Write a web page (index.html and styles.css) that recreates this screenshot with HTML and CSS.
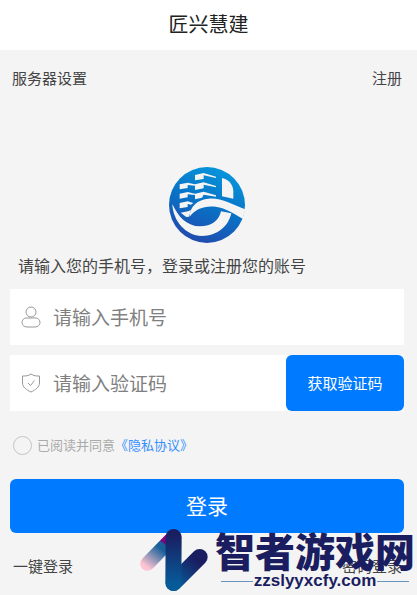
FILE: index.html
```html
<!DOCTYPE html>
<html lang="zh-CN">
<head>
    <meta charset="UTF-8">
    <meta name="viewport" content="width=device-width, initial-scale=1.0">
    <title>匠兴慧建</title>
    <link rel="stylesheet" href="styles.css">
</head>
<body>
    <header class="header">
        <h1>匠兴慧建</h1>
    </header>

    <nav class="links">
        <a href="#">服务器设置</a>
        <a href="#">注册</a>
    </nav>

    <main class="content">
        <svg class="logo" viewBox="27 27 228 228" role="img" aria-label="匠兴慧建">
            <defs>
                <linearGradient id="logoFill" x1="0.7" y1="0" x2="0.3" y2="1">
                    <stop offset="0" stop-color="#0896dc"/>
                    <stop offset="0.5" stop-color="#0872c6"/>
                    <stop offset="1" stop-color="#2448ac"/>
                </linearGradient>
            </defs>
            <circle cx="141" cy="141" r="114" fill="url(#logoFill)"/>
            <g fill="#f4f4f4">
                <!-- edificios -->
                <path d="M105 51l26-6 37 11v4l-37-8v11l-26 4z"/>
                <path d="M105 79l26-6 37 11v4l-37-8v11l-26 5z"/>
                <path d="M105 107l26-6 37 11v4l-37-6-5 9-21 5z"/>
                <path d="M59 79l24-5 22 5v4l-22-2v9l-24 4z"/>
                <path d="M59 107l24-5 22 5v4l-22-2v9l-24 4z"/>
                <path d="M59 135l24-5 17 5-7 5-10-2v9l-24 4z"/>
                <path d="M62 164l22-4 9-4-6 20-8 1z"/>
                <path d="M186 60c20 4 33 20 34 39v23l-34-7z"/>
                <!-- ola -->
                <path d="M89 176c0-30 24-52 57-54 39-3 73 19 110 32l-8 28c-25-14-50-32-81-36-33-4-60 6-78 30z"/>
                <path d="M37 138c17 38 44 67 83 67 35 0 57-18 63-45l31 6c-9 40-43 68-88 68-49-1-87-45-89-96z"/>
            </g>
        </svg>

        <form class="login-form">
            <p class="tip">请输入您的手机号，登录或注册您的账号</p>

            <div class="field">
                <svg class="icon" viewBox="0 0 20 22" aria-hidden="true">
                    <circle cx="10" cy="6" r="5"/>
                    <path d="M5 12h10c2 0 4 2 4 4.500s-2 4.500-5 4.500H6c-3 0-5-2-5-4.500S3 12 5 12z"/>
                </svg>
                <input type="tel" placeholder="请输入手机号" aria-label="手机号">
            </div>

            <div class="field">
                <svg class="icon" viewBox="0 0 20 22" aria-hidden="true">
                    <path d="M10 2c3 2 5 2 8.500 2v7c0 4-4 7-8.500 9-4.500-2-8.500-5-8.500-9V4C5 4 7 4 10 2z"/>
                    <path d="M7 11l2.500 2.500L13.500 8.500"/>
                </svg>
                <input type="text" placeholder="请输入验证码" aria-label="验证码">
                <button type="button" class="code-btn">获取验证码</button>
            </div>

            <div class="agree">
                <input type="checkbox" id="agree">
                <label for="agree">已阅读并同意</label><a href="#">《隐私协议》</a>
            </div>

            <button type="submit" class="login-btn">登录</button>
        </form>
    </main>

    <footer class="links bottom">
        <a href="#">一键登录</a>
        <a href="#">密码登录</a>
    </footer>

    <div class="watermark">
        <svg class="mark" viewBox="27 27 204 186" aria-hidden="true">
            <defs>
                <linearGradient id="pink" gradientUnits="userSpaceOnUse" x1="45" y1="140" x2="106" y2="60">
                    <stop offset="0" stop-color="#ffc4d2"/>
                    <stop offset="0.700" stop-color="#17609a"/>
                    <stop offset="0.850" stop-color="#17609a"/>
                    <stop offset="0.900" stop-color="#800080"/>
                </linearGradient>
                <linearGradient id="navy" gradientUnits="userSpaceOnUse" x1="128" y1="40" x2="128" y2="190">
                    <stop offset="0" stop-color="#1a1d60"/>
                    <stop offset="1" stop-color="#075a98"/>
                </linearGradient>
                <linearGradient id="arm" gradientUnits="userSpaceOnUse" x1="135" y1="190" x2="195" y2="120">
                    <stop offset="0" stop-color="#075a98"/>
                    <stop offset="1" stop-color="#1a1d60"/>
                </linearGradient>
            </defs>
            <g fill="none" stroke-linecap="round">
                <path d="M49 131L118 61" stroke="url(#pink)" stroke-width="43"/>
                <path d="M128 189L206 111" stroke="url(#arm)" stroke-width="48"/>
                <path d="M128 51L127 189" stroke="url(#navy)" stroke-width="48"/>
            </g>
        </svg>
        <div class="site">
            <strong>智者游戏网</strong>
            <span class="url">zzslyyxcfy.com</span>
        </div>
    </div>
</body>
</html>
```
FILE: styles.css
```css
* {
    box-sizing: border-box;
}

body {
    position: relative;
    margin: 0;
    min-height: 100vh;
    background: #f4f4f4;
    color: #444;
    font-family: "Noto Sans CJK SC", sans-serif;
    font-size: 15px;
    overflow-x: hidden;
}

a {
    color: inherit;
    text-decoration: none;
}

button,
input {
    font-family: inherit;
}

.header {
    height: 50px;
    background: #fff;
    text-align: center;
}

.header h1 {
    margin: 0;
    color: #222;
    font-size: 20px;
    font-weight: 400;
    line-height: 48px;
}

.links {
    display: flex;
    justify-content: space-between;
    padding: 16px 15px 0 12px;
    line-height: 24px;
}

.content {
    padding: 77px 13px 0 10px;
}

.logo {
    display: block;
    width: 76px;
    height: 76px;
    margin: 0 auto;
}

.tip {
    margin: 10px 8px 12px;
    font-size: 16px;
    line-height: 24px;
}

.field {
    display: flex;
    align-items: center;
    height: 56px;
    margin-bottom: 10px;
    padding-left: 11px;
    background: #fff;
}

.icon {
    flex: none;
    width: 20px;
    height: 22px;
    margin-right: 12px;
    fill: none;
    stroke: #999;
    stroke-width: 1;
}

.field input {
    flex: 1;
    min-width: 0;
    height: 100%;
    padding: 0 0 2px;
    border: 0;
    outline: none;
    background: none;
    color: #333;
    font-size: 19px;
}

.field input::placeholder {
    color: #808080;
}

.code-btn {
    flex: none;
    width: 118px;
    height: 100%;
    padding: 0 0 2px;
    border: 0;
    border-radius: 6px;
    background: #007aff;
    color: #fff;
    font-size: 15px;
}

.agree {
    display: flex;
    align-items: center;
    height: 20px;
    margin-top: 24px;
    padding-left: 3px;
    color: #aaa;
    font-size: 13px;
    line-height: 18px;
}

.agree input {
    appearance: none;
    width: 19px;
    height: 19px;
    margin: 0 5px 0 0;
    border: 1px solid #c4c4c4;
    border-radius: 50%;
}

.agree input:checked {
    background: #007aff;
}

.agree a {
    color: #3790ff;
}

.login-btn {
    display: block;
    width: 100%;
    height: 54px;
    margin-top: 24px;
    padding: 0 0 2px;
    border: 0;
    border-radius: 6px;
    background: #007aff;
    color: #fff;
    font-size: 21px;
}

.bottom {
    padding: 21px 15px 0 13px;
}

/* marca de agua sobre el pie */
.watermark {
    position: absolute;
    right: 2px;
    bottom: 2px;
    display: flex;
    align-items: flex-end;
    gap: 7px;
    color: #1a1d60;
    pointer-events: none;
}

.mark {
    width: 68px;
    height: 62px;
    margin-bottom: 2px;
}

.site strong {
    display: block;
    font-size: 40px;
    font-weight: 900;
    line-height: 44px;
}

.url {
    display: flex;
    align-items: center;
    gap: 1px;
    margin: 0 6px;
    padding-bottom: 3px;
    font: bold 17px/18px "Liberation Sans", Arial, sans-serif;
}

.url::before,
.url::after {
    content: "";
    flex: 1;
    height: 1px;
    background: #6795bd;
}
```
